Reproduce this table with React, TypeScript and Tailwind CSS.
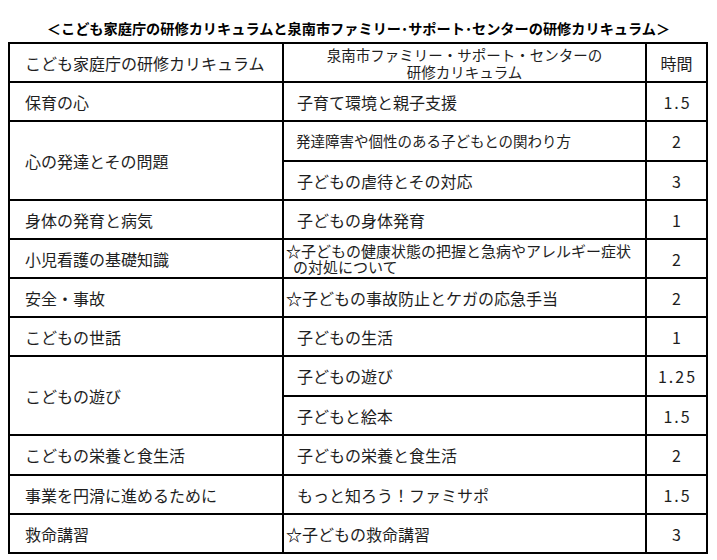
import React from "react";

const font = { fontFamily: '"Noto Sans CJK JP", "Noto Sans", sans-serif' };

const c1 = "bg-white flex items-center pl-[15px] text-[16px] leading-[20px] text-[#1e1e1e] whitespace-nowrap";
const c2 = "bg-white flex items-center pl-[13px] text-[16px] leading-[20px] text-[#1e1e1e] whitespace-nowrap";
const c3 = "bg-white flex items-center justify-center pl-[2px] text-[16px] leading-[20px] tracking-[2px] text-[#1e1e1e]";
const star = "font-bold text-black";

export default function App() {
  return (
    <div className="w-[717px] h-[560px] bg-white pt-[18px]" style={font}>
      <div className="w-full text-center text-[14.2px] leading-[20px] font-bold text-black whitespace-nowrap mb-[4px]">
        ＜こども家庭庁の研修カリキュラムと泉南市ファミリー･サポート･センターの研修カリキュラム＞
      </div>
      <div className="ml-[8px] w-[700px] bg-black p-[2px] grid gap-[2px] grid-cols-[272px_361px_59px] grid-rows-[37px_37px_38px_37px_37px_37px_37px_37px_38px_37px_38px_37px_37px]">
        {/* header */}
        <div className={c1}>こども家庭庁の研修カリキュラム</div>
        <div className="bg-white flex flex-col items-center justify-center text-[14.5px] leading-[17px] text-[#1e1e1e] whitespace-nowrap pt-[1px]">
          <span>泉南市ファミリー・サポート・センターの</span>
          <span>研修カリキュラム</span>
        </div>
        <div className="bg-white flex items-center justify-center text-[16px] leading-[20px] text-[#1e1e1e]">時間</div>

        <div className={c1}>保育の心</div>
        <div className={c2}>子育て環境と親子支援</div>
        <div className={c3}>1.5</div>

        <div className={c1 + " row-span-2"}>心の発達とその問題</div>
        <div className="bg-white flex items-center pl-[12px] text-[14.5px] leading-[20px] text-[#1e1e1e] whitespace-nowrap">
          発達障害や個性のある子どもとの関わり方
        </div>
        <div className={c3}>2</div>
        <div className={c2}>子どもの虐待とその対応</div>
        <div className={c3}>3</div>

        <div className={c1}>身体の発育と病気</div>
        <div className={c2}>子どもの身体発育</div>
        <div className={c3}>1</div>

        <div className={c1}>小児看護の基礎知識</div>
        <div className="bg-white flex flex-col justify-center pl-[2px] text-[15px] leading-[16px] text-[#1e1e1e] whitespace-nowrap">
          <span>
            <span className={star}>☆</span>子どもの健康状態の把握と急病やアレルギー症状
          </span>
          <span className="pl-[7px]">の対処について</span>
        </div>
        <div className={c3}>2</div>

        <div className={c1}>安全・事故</div>
        <div className="bg-white flex items-center pl-[2px] text-[16px] leading-[20px] text-[#1e1e1e] whitespace-nowrap">
          <span className={star}>☆</span>子どもの事故防止とケガの応急手当
        </div>
        <div className={c3}>2</div>

        <div className={c1}>こどもの世話</div>
        <div className={c2}>子どもの生活</div>
        <div className={c3}>1</div>

        <div className={c1 + " row-span-2"}>こどもの遊び</div>
        <div className={c2}>子どもの遊び</div>
        <div className={c3}>1.25</div>
        <div className={c2}>子どもと絵本</div>
        <div className={c3}>1.5</div>

        <div className={c1}>こどもの栄養と食生活</div>
        <div className={c2}>子どもの栄養と食生活</div>
        <div className={c3}>2</div>

        <div className={c1}>事業を円滑に進めるために</div>
        <div className={c2}>もっと知ろう！ファミサポ</div>
        <div className={c3}>1.5</div>

        <div className={c1}>救命講習</div>
        <div className="bg-white flex items-center pl-[2px] text-[16px] leading-[20px] text-[#1e1e1e] whitespace-nowrap">
          <span className={star}>☆</span>子どもの救命講習
        </div>
        <div className={c3}>3</div>
      </div>
    </div>
  );
}
